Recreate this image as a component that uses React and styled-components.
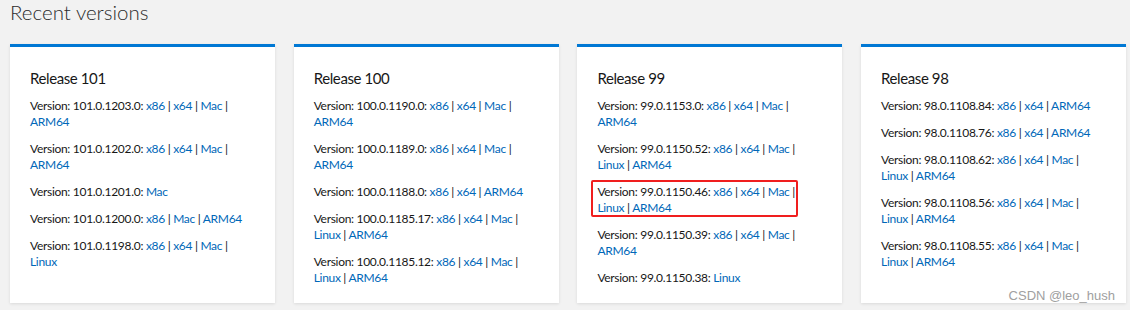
import React from "react";
import styled, { createGlobalStyle } from "styled-components";

// Release data as shown on the page
const releases = [
  {
    name: "Release 101",
    versions: [
      { id: "101.0.1203.0", links: ["x86", "x64", "Mac", "ARM64"] },
      { id: "101.0.1202.0", links: ["x86", "x64", "Mac", "ARM64"] },
      { id: "101.0.1201.0", links: ["Mac"] },
      { id: "101.0.1200.0", links: ["x86", "Mac", "ARM64"] },
      { id: "101.0.1198.0", links: ["x86", "x64", "Mac", "Linux"] },
    ],
  },
  {
    name: "Release 100",
    versions: [
      { id: "100.0.1190.0", links: ["x86", "x64", "Mac", "ARM64"] },
      { id: "100.0.1189.0", links: ["x86", "x64", "Mac", "ARM64"] },
      { id: "100.0.1188.0", links: ["x86", "x64", "ARM64"] },
      { id: "100.0.1185.17", links: ["x86", "x64", "Mac", "Linux", "ARM64"] },
      { id: "100.0.1185.12", links: ["x86", "x64", "Mac", "Linux", "ARM64"] },
    ],
  },
  {
    name: "Release 99",
    versions: [
      { id: "99.0.1153.0", links: ["x86", "x64", "Mac", "ARM64"] },
      { id: "99.0.1150.52", links: ["x86", "x64", "Mac", "Linux", "ARM64"] },
      { id: "99.0.1150.46", links: ["x86", "x64", "Mac", "Linux", "ARM64"], marked: true },
      { id: "99.0.1150.39", links: ["x86", "x64", "Mac", "ARM64"] },
      { id: "99.0.1150.38", links: ["Linux"] },
    ],
  },
  {
    name: "Release 98",
    versions: [
      { id: "98.0.1108.84", links: ["x86", "x64", "ARM64"] },
      { id: "98.0.1108.76", links: ["x86", "x64", "ARM64"] },
      { id: "98.0.1108.62", links: ["x86", "x64", "Mac", "Linux", "ARM64"] },
      { id: "98.0.1108.56", links: ["x86", "x64", "Mac", "Linux", "ARM64"] },
      { id: "98.0.1108.55", links: ["x86", "x64", "Mac", "Linux", "ARM64"] },
    ],
  },
];

const GlobalStyle = createGlobalStyle`
  html, body {
    margin: 0;
    background: #f2f2f2;
  }
  body {
    font-family: "Segoe UI", Lato, "Open Sans", sans-serif;
    color: #171717;
  }
`;

const Page = styled.div`
  position: relative;
  width: 1130px;
  height: 310px;
  overflow: hidden;
  padding: 0 10px;
  box-sizing: border-box;
`;

const Heading = styled.h2`
  margin: 0;
  font-size: 20.5px;
  font-weight: 300;
  line-height: 24px;
  color: #2b2b2b;
`;

const Grid = styled.div`
  display: grid;
  grid-template-columns: repeat(4, 265px);
  column-gap: 18.7px;
  margin-top: 20px;
`;

const Card = styled.section`
  background: #fff;
  border-top: 3px solid #0078d4;
  height: 259px;
  padding: 20px;
  box-sizing: border-box;
  box-shadow: 0 1px 3px rgba(0, 0, 0, 0.1);
  overflow: hidden;
`;

const CardTitle = styled.h3`
  margin: 0 0 9px;
  font-size: 15px;
  font-weight: 400;
  letter-spacing: -0.4px;
  line-height: 22px;
  color: #171717;
`;

const Entry = styled.p`
  position: relative;
  margin: 0 0 11px;
  font-size: 12px;
  letter-spacing: -0.3px;
  line-height: 16px;

  ${(p) =>
    p.$marked &&
    `
    &::after {
      content: "";
      position: absolute;
      left: -6px;
      top: -4px;
      width: 203px;
      height: 33px;
      border: 2px solid #f01e1e;
      border-radius: 2px;
    }
  `}
`;

const Link = styled.a`
  color: #0067b8;
  text-decoration: none;
`;

const Watermark = styled.span`
  position: absolute;
  right: 15px;
  bottom: 7px;
  font-family: "Liberation Sans", Arial, sans-serif;
  font-size: 13px;
  line-height: 15px;
  color: #a0a0a0;
`;

const VersionEntry = ({ version }) => (
  <Entry $marked={version.marked}>
    Version: {version.id}:{" "}
    {version.links.map((l, i) => (
      <React.Fragment key={l}>
        {i > 0 && " | "}
        <Link href="#">{l}</Link>
      </React.Fragment>
    ))}
  </Entry>
);

export default function App() {
  return (
    <>
      <GlobalStyle />
      <Page>
        <Heading>Recent versions</Heading>
        <Grid>
          {releases.map((r) => (
            <Card key={r.name}>
              <CardTitle>{r.name}</CardTitle>
              {r.versions.map((v) => (
                <VersionEntry key={v.id} version={v} />
              ))}
            </Card>
          ))}
        </Grid>
        <Watermark>CSDN @leo_hush</Watermark>
      </Page>
    </>
  );
}
